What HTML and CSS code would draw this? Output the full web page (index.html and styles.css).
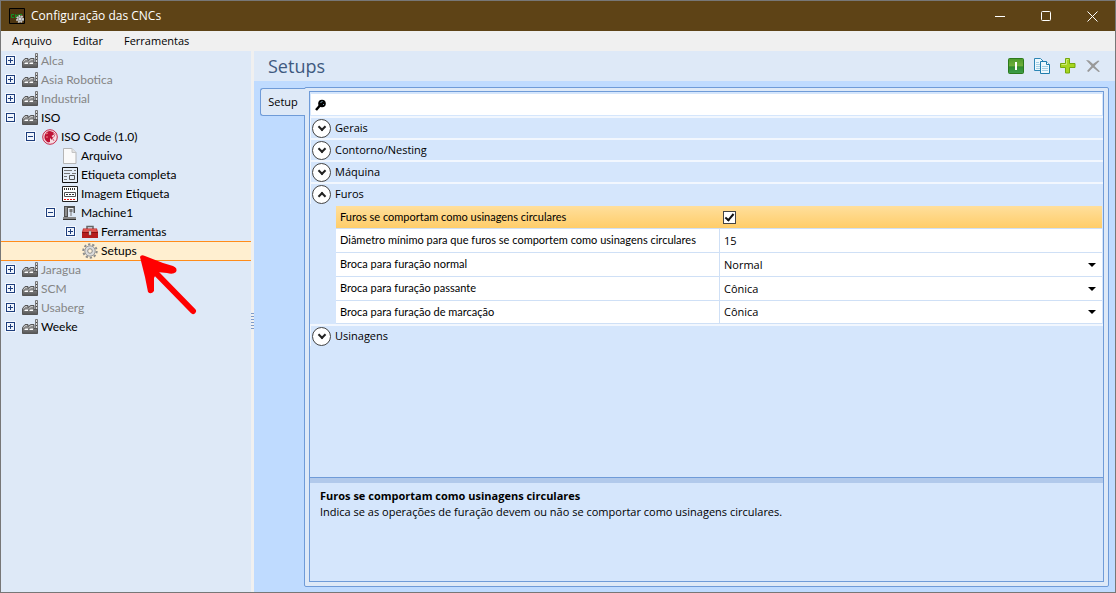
FILE: index.html
```html
<!DOCTYPE html>
<html lang="pt-BR">
  <head>
    <meta charset="utf-8">
    <title>Configuração das CNCs</title>
    <link rel="stylesheet" href="styles.css">
  </head>
  <body>
    <svg class="sprite" aria-hidden="true">
      <defs>
        <linearGradient id="metal" x1="0" y1="0" x2="0" y2="1">
          <stop offset="0" stop-color="#a0a0a0"/>
          <stop offset="1" stop-color="#555"/>
        </linearGradient>
        <linearGradient id="green" x1="0" y1="0" x2="0" y2="1">
          <stop offset="0" stop-color="#4c9a2c"/>
          <stop offset="0.5" stop-color="#6fb03c"/>
          <stop offset="0.55" stop-color="#2f8a2f"/>
          <stop offset="1" stop-color="#3f9f4a"/>
        </linearGradient>
      </defs>
      <symbol id="factory" viewBox="0 0 16 16">
        <path d="M13.500 10V.5h2V10" fill="#ddd" stroke="#777"/>
        <path d="M14 3.500h1M14 6.500h1" stroke="#444"/>
        <path d="M.5 14.500V8.500L3 5.500h3v2l2.500-2H12v4h3.500v5z" fill="url(#metal)" stroke="#555"/>
        <path d="M1.500 8.500l2-2H5M7 8.500l2-2h2" fill="none" stroke="#ccc"/>
        <path d="M2 11l1.500-1.500H6V11zM7 11l1.500-1.500H11V11z" fill="#fff"/>
      </symbol>
      <symbol id="iso" viewBox="0 0 16 16">
        <circle cx="8" cy="8" r="7.300" fill="#f5dce2" stroke="#c8284a" stroke-width="1"/>
        <path d="M8 2a6 6 0 0 0-4 10l2 1.500 2-.5V9l2 2 1-2.500-1.500-1.500L12 5.500 11 3z" fill="#bd1236"/>
        <path d="M11 3l2 2.500-1.500 3M11 10l1 2" stroke="#d4607a" fill="none"/>
        <path d="M4 5l2-1M4 8h2" stroke="#e88" fill="none"/>
      </symbol>
      <symbol id="file" viewBox="0 0 16 16">
        <path d="M1.500.5h8.500l4 4v11h-12.500z" fill="#fafafa" stroke="#b5b5b5"/>
        <path d="M10 .5v4h4" fill="#e2e2e2" stroke="#c4c4c4"/>
      </symbol>
      <symbol id="label" viewBox="0 0 16 16">
        <path d="M.5.5h15v15H.5z" fill="#e4edf7" stroke="#111"/>
        <path d="M2 3.500h8M2 6.500h6M12 3.500h2M10 6.500h4M2 9.500h3M2 12.500h3" stroke="#777"/>
        <path d="M7.500 8.500h5v4h-5z" fill="none" stroke="#555"/>
      </symbol>
      <symbol id="image-label" viewBox="0 0 16 16">
        <path d="M.5.5h15v15H.5z" fill="#fff" stroke="#222"/>
        <path d="M2 3h12" stroke="#333" stroke-width="2" stroke-dasharray="1 1"/>
        <path d="M2.500 6.500h11v4h-11z" fill="none" stroke="#555"/>
        <path d="M4 8.500h8" stroke="#333" stroke-dasharray="2 1"/>
        <path d="M2 13.500h12" stroke="#e11" stroke-dasharray="2 1"/>
      </symbol>
      <symbol id="machine" viewBox="0 0 16 16">
        <path d="M2 1h11v7h-1.500V3H6v9H2z" fill="#505050"/>
        <path d="M3 2h2v9H3z" fill="#8c8c8c"/>
        <path d="M6 3h5v1H6z" fill="#eee"/>
        <path d="M7.500 4h3v3h-1v4h-1V7h-1z" fill="#777"/>
        <path d="M1 12h13v2H1z" fill="#888"/>
        <path d="M1 14.500h13" stroke="#333"/>
      </symbol>
      <symbol id="toolbox" viewBox="0 0 16 16">
        <path d="M5 5V2.500h6V5" fill="none" stroke="#666" stroke-width="1.500"/>
        <path d="M1 4.500h14l1 4v5.500H0V8.500z" fill="#b51d1d"/>
        <path d="M1.500 5h13l.5 3H1z" fill="#df5550"/>
        <path d="M0 8.500h16" stroke="#871010"/>
        <path d="M7 7h2v4H7z" fill="#eee" stroke="#777" stroke-width=".5"/>
      </symbol>
      <symbol id="gear" viewBox="0 0 16 16">
        <circle cx="8" cy="8" r="6.700" fill="none" stroke="#8c8c8c" stroke-width="2" stroke-dasharray="2.300 1.900"/>
        <circle cx="8" cy="8" r="5.200" fill="#dcdcdc" stroke="#999"/>
        <circle cx="8" cy="8" r="2.300" fill="#fff3dc" stroke="#8c8c8c"/>
      </symbol>
    </svg>

    <div class="window">
      <header class="titlebar">
        <svg class="app-icon" viewBox="0 0 16 16">
          <path d="M.5.5h15v15H.5z" fill="#4d3510" stroke="#000"/>
          <path d="M5 6.500H2.500v3H5M6.500 10V6.500L9 9.500V6M13 6.500h-2.500v3" fill="none" stroke="#129322"/>
          <circle cx="11" cy="11" r="3" fill="#999" stroke="#ccc" stroke-width="2" stroke-dasharray="1.500 1"/>
          <circle cx="11" cy="11" r="1" fill="#eee"/>
        </svg>
        <h1>Configuração das CNCs</h1>
        <div class="window-buttons">
          <button type="button" aria-label="Minimizar">
            <svg viewBox="0 0 11 11"><path d="M0 5.500h10" stroke="#fff"/></svg>
          </button>
          <button type="button" aria-label="Maximizar">
            <svg viewBox="0 0 11 11"><rect x=".5" y=".5" width="9" height="9" rx="1" fill="none" stroke="#fff"/></svg>
          </button>
          <button type="button" aria-label="Fechar">
            <svg viewBox="0 0 11 11"><path d="M.5.5l10 10M10.500.5l-10 10" stroke="#fff"/></svg>
          </button>
        </div>
      </header>

      <nav class="menubar">
        <button type="button">Arquivo</button>
        <button type="button">Editar</button>
        <button type="button">Ferramentas</button>
      </nav>

      <div class="workspace">
        <aside class="sidebar">
          <ul class="tree">
            <li class="muted"><button class="toggle plus" aria-label="Expandir"></button><svg><use href="#factory"/></svg><span>Alca</span></li>
            <li class="muted"><button class="toggle plus" aria-label="Expandir"></button><svg><use href="#factory"/></svg><span>Asia Robotica</span></li>
            <li class="muted"><button class="toggle plus" aria-label="Expandir"></button><svg><use href="#factory"/></svg><span>Industrial</span></li>
            <li><button class="toggle" aria-label="Recolher"></button><svg><use href="#factory"/></svg><span>ISO</span></li>
            <li class="level1"><button class="toggle" aria-label="Recolher"></button><svg><use href="#iso"/></svg><span>ISO Code (1.0)</span></li>
            <li class="level2 leaf"><svg><use href="#file"/></svg><span>Arquivo</span></li>
            <li class="level2 leaf"><svg><use href="#label"/></svg><span>Etiqueta completa</span></li>
            <li class="level2 leaf"><svg><use href="#image-label"/></svg><span>Imagem Etiqueta</span></li>
            <li class="level2"><button class="toggle" aria-label="Recolher"></button><svg><use href="#machine"/></svg><span>Machine1</span></li>
            <li class="level3"><button class="toggle plus" aria-label="Expandir"></button><svg><use href="#toolbox"/></svg><span>Ferramentas</span></li>
            <li class="level3 leaf selected"><svg><use href="#gear"/></svg><span>Setups</span></li>
            <li class="muted"><button class="toggle plus" aria-label="Expandir"></button><svg><use href="#factory"/></svg><span>Jaragua</span></li>
            <li class="muted"><button class="toggle plus" aria-label="Expandir"></button><svg><use href="#factory"/></svg><span>SCM</span></li>
            <li class="muted"><button class="toggle plus" aria-label="Expandir"></button><svg><use href="#factory"/></svg><span>Usaberg</span></li>
            <li><button class="toggle plus" aria-label="Expandir"></button><svg><use href="#factory"/></svg><span>Weeke</span></li>
          </ul>
          <svg class="pointer" viewBox="0 0 58 62">
            <path d="M14 16L54 57" fill="none" stroke="#f00" stroke-width="6" stroke-linecap="round"/>
            <path d="M1 3Q2 0 6 2L24 9 34 12Q39 14 37 18Q34 21 28 19L18 18 15 24 15 37Q12 41 9 38L6 23z" fill="#f00"/>
          </svg>
        </aside>
        <div class="splitter"><i></i></div>

        <main class="content">
          <div class="content-header">
            <h2>Setups</h2>
            <div class="actions">
              <button type="button" aria-label="Ativar">
                <svg viewBox="0 0 16 16">
                  <rect x=".5" y=".5" width="15" height="15" rx="1" fill="url(#green)" stroke="#2c7a1c"/>
                  <path d="M7 4h2v8H7z" fill="#fff"/>
                </svg>
              </button>
              <button type="button" aria-label="Copiar">
                <svg viewBox="0 0 16 16">
                  <path d="M.5.5h6l3 3v9h-9z" fill="#eef8fd" stroke="#2c86b5"/>
                  <path d="M2 4.500h3M2 6.500h4M2 8.500h4M2 10.500h4" stroke="#a4cfe4"/>
                  <path d="M6.500 3.500h6l3 3v9h-9z" fill="#eef8fd" stroke="#1f7cad"/>
                  <path d="M12.500 3.500v3h3" fill="#fff" stroke="#1f7cad"/>
                  <path d="M8 8.500h6M8 10.500h6M8 12.500h6" stroke="#a4cfe4"/>
                </svg>
              </button>
              <button type="button" aria-label="Adicionar">
                <svg viewBox="0 0 16 16">
                  <path d="M5.500.5h4v5h5.500v4H9.500v5.500h-4V9.500H.5v-4h5z" fill="#a6d51f" stroke="#74a80e"/>
                  <path d="M6.500 1.500h2M1.500 6.500h5v-5" fill="none" stroke="#cdeb72"/>
                </svg>
              </button>
              <button type="button" aria-label="Excluir" disabled>
                <svg viewBox="0 0 16 16">
                  <path d="M0 2L3 2.500 7 6 12 2.500 13.500 3 8.500 8 14 13.500 12.500 14 7 9.500 2.500 14 1 13 5.500 8z" fill="#999"/>
                </svg>
              </button>
            </div>
          </div>

          <div class="content-body">
            <button type="button" class="tab">Setup</button>
            <div class="tab-panel">
              <div class="property-grid">
                <label class="search">
                  <svg viewBox="0 0 12 12">
                    <path d="M1 11l4-4.500" stroke="#000" stroke-width="2.500"/>
                    <circle cx="7" cy="4.500" r="3.800" fill="#000"/>
                    <path d="M5.500 3.500l2-1M8 5l1 1" stroke="#7ba4b8"/>
                  </svg>
                  <input type="search" aria-label="Pesquisar">
                </label>

                <div class="group"><button type="button" class="group-header"><i></i>Gerais</button></div>
                <div class="group"><button type="button" class="group-header"><i></i>Contorno/Nesting</button></div>
                <div class="group"><button type="button" class="group-header"><i></i>Máquina</button></div>
                <div class="group open">
                  <button type="button" class="group-header"><i></i>Furos</button>
                  <div class="rows">
                    <div class="row active">
                      <label for="circular">Furos se comportam como usinagens circulares</label>
                      <div class="value"><input type="checkbox" id="circular" checked></div>
                    </div>
                    <div class="row">
                      <label for="diameter">Diâmetro mínimo para que furos se comportem como usinagens circulares</label>
                      <div class="value"><input type="text" id="diameter" value="15"></div>
                    </div>
                    <div class="row">
                      <label for="normal">Broca para furação normal</label>
                      <div class="value drop"><select id="normal"><option>Normal</option><option>Cônica</option></select></div>
                    </div>
                    <div class="row">
                      <label for="through">Broca para furação passante</label>
                      <div class="value drop"><select id="through"><option>Cônica</option><option>Normal</option></select></div>
                    </div>
                    <div class="row">
                      <label for="marking">Broca para furação de marcação</label>
                      <div class="value drop"><select id="marking"><option>Cônica</option><option>Normal</option></select></div>
                    </div>
                  </div>
                </div>
                <div class="group"><button type="button" class="group-header"><i></i>Usinagens</button></div>

                <div class="description">
                  <strong>Furos se comportam como usinagens circulares</strong>
                  <p>Indica se as operações de furação devem ou não se comportar como usinagens circulares.</p>
                </div>
              </div>
            </div>
          </div>
        </main>
      </div>
    </div>
  </body>
</html>
```

FILE: styles.css
```css
:root {
  --pale: #dee9f7;
  --panel: #d5e6fc;
  --blue: #bfdbff;
  --line: #6f9bd8;
}

*,
*::before,
*::after {
  box-sizing: border-box;
  margin: 0;
  padding: 0;
}

body {
  font-family: "Open Sans", "Noto Sans", sans-serif;
  font-size: 11px;
  line-height: 16px;
  color: #000;
}

button,
input,
select {
  font: inherit;
  color: inherit;
  background: none;
  border: 0;
  outline: 0;
  appearance: none;
}

.sprite {
  position: absolute;
  width: 0;
  height: 0;
}

.window {
  display: flex;
  flex-direction: column;
  height: 100vh;
  border: 1px solid #777;
}

/* title bar and menu */

.titlebar {
  display: flex;
  align-items: center;
  height: 30px;
  padding-left: 8px;
  background: #5e4316;
  color: #fff;
}

.app-icon {
  width: 16px;
  height: 16px;
  margin-right: 6px;
}

.titlebar h1 {
  flex: 1;
  font-size: 12px;
  font-weight: normal;
}

.window-buttons {
  display: flex;
}

.window-buttons button {
  display: flex;
  align-items: center;
  justify-content: center;
  width: 46px;
  height: 30px;
}

.window-buttons svg {
  width: 11px;
  height: 11px;
}

.menubar {
  display: flex;
  gap: 21px;
  height: 20px;
  padding-left: 11px;
  background: #f0f0f0;
}

.workspace {
  display: flex;
  flex: 1;
  min-height: 0;
}

/* tree */

.sidebar {
  position: relative;
  width: 250px;
  background: var(--pale);
}

.tree {
  list-style: none;
}

.tree li {
  display: flex;
  align-items: center;
  height: 19px;
  padding-left: 5px;
  font-family: Lato, "Open Sans", sans-serif;
  font-size: 12px;
}

.tree svg {
  width: 16px;
  height: 16px;
  margin: 0 3px 0 7px;
}

.tree .muted {
  color: #858585;
}

.tree .level1 {
  padding-left: 25px;
}

.tree .level2 {
  padding-left: 45px;
}

.tree .level3 {
  padding-left: 65px;
}

.tree .leaf::before {
  content: "";
  width: 9px;
}

.tree .selected {
  height: 20px;
  margin-bottom: -1px;
  background: #ffefd0;
  border-top: 1px solid #ff8c1a;
  border-bottom: 1px solid #ff8c1a;
}

.toggle {
  width: 9px;
  height: 9px;
  border: 1px solid #1d3d7c;
  outline: 1px solid #f4f8fd;
  background:
    linear-gradient(#1d3d7c, #1d3d7c) 1px 3px / 5px 1px no-repeat,
    #f1f6fd;
}

.toggle.plus {
  background:
    linear-gradient(#1d3d7c, #1d3d7c) 1px 3px / 5px 1px no-repeat,
    linear-gradient(#1d3d7c, #1d3d7c) 3px 1px / 1px 5px no-repeat,
    #f1f6fd;
}

.pointer {
  position: absolute;
  left: 138px;
  top: 203px;
  width: 58px;
  height: 62px;
}

.splitter {
  display: flex;
  align-items: center;
  width: 3px;
  background: #f0f0f0;
}

.splitter i {
  width: 3px;
  height: 18px;
  background: repeating-linear-gradient(#7f9bc8 0 1px, transparent 1px 3px);
}

/* content */

.content {
  display: flex;
  flex: 1;
  flex-direction: column;
  min-width: 0;
  background: var(--blue);
}

.content-header {
  display: flex;
  align-items: center;
  justify-content: space-between;
  height: 30px;
  padding: 0 13px 0 14px;
  background: var(--pale);
}

.content-header h2 {
  font-size: 18px;
  line-height: 26px;
  font-weight: normal;
  color: #3f5a80;
}

.actions {
  display: flex;
  gap: 10px;
}

.actions button,
.actions svg {
  display: block;
  width: 16px;
  height: 16px;
}

.content-body {
  display: flex;
  flex: 1;
  align-items: flex-start;
  min-height: 0;
  padding: 6px 6px 5px;
}

.tab {
  z-index: 1;
  width: 45px;
  height: 28px;
  margin: 1px -1px 0 0;
  border: 1px solid var(--line);
  border-right: 0;
  border-radius: 3px 0 0 3px;
  background: var(--pale);
}

.tab-panel {
  flex: 1;
  align-self: stretch;
  min-width: 0;
  padding: 3px 4px 4px;
  border: 1px solid var(--line);
  border-radius: 2px;
  background: var(--pale);
}

.property-grid {
  display: flex;
  flex-direction: column;
  height: 100%;
  border: 1px solid var(--line);
  background: var(--panel);
}

.search {
  display: flex;
  align-items: center;
  height: 21px;
  margin: 2px 1px 1px;
  padding-left: 4px;
  background: #fff;
}

.search svg {
  width: 12px;
  height: 12px;
}

.search input {
  flex: 1;
}

.group-header {
  display: flex;
  align-items: center;
  gap: 4px;
  width: 100%;
  height: 22px;
  padding-left: 1px;
  border-top: 2px solid #f2f7fe;
  border-left: 1px solid #f2f7fe;
}

.group-header i {
  display: flex;
  align-items: center;
  justify-content: center;
  flex: none;
  width: 19px;
  height: 19px;
  border: 1px solid #444;
  border-radius: 50%;
  background: #fff;
}

.group-header i::before {
  content: "";
  width: 6px;
  height: 6px;
  margin-top: -3px;
  border: solid #222;
  border-width: 0 2px 2px 0;
  transform: rotate(45deg);
}

.open .group-header i::before {
  margin-top: 3px;
  transform: rotate(225deg);
}

.group:last-of-type .group-header {
  border-bottom: 1px solid #f2f7fe;
}

.rows {
  padding: 2px 1px 0 26px;
}

.row {
  display: flex;
  height: 24px;
  background: #fff;
  border-bottom: 1px solid #cfe0f6;
}

.row.active,
.row:last-child {
  height: 23px;
}

.row.active {
  background: linear-gradient(#ffdf9c, #ffcd69);
}

.row label {
  width: 50%;
  padding: 3px 4px;
  font-family: Lato, "Open Sans", sans-serif;
  line-height: 16px;
  white-space: nowrap;
}

.value {
  display: flex;
  align-items: center;
  flex: 1;
  padding-left: 4px;
  border-left: 1px solid #cfe0f6;
}

.active .value {
  padding-left: 3px;
  border-color: transparent;
}

.value input[type="text"],
.value select {
  width: 100%;
}

.value input[type="checkbox"] {
  display: flex;
  justify-content: center;
  width: 13px;
  height: 13px;
  border: 1px solid #444;
  background: #fff;
}

.value input[type="checkbox"]:checked::before {
  content: "";
  width: 5px;
  height: 9px;
  border: solid #111;
  border-width: 0 2px 2px 0;
  transform: rotate(40deg);
}

.drop::after {
  content: "";
  margin-right: 6px;
  border: solid transparent;
  border-width: 4px 4px 0;
  border-top-color: #000;
}

.description {
  height: 104px;
  margin-top: auto;
  padding: 6px 10px;
  border-top: 1px solid var(--line);
  box-shadow: inset 0 5px #b1c9eb;
}

.description strong,
.description p {
  display: block;
  line-height: 16px;
}

.description strong {
  padding-top: 4px;
}
```
